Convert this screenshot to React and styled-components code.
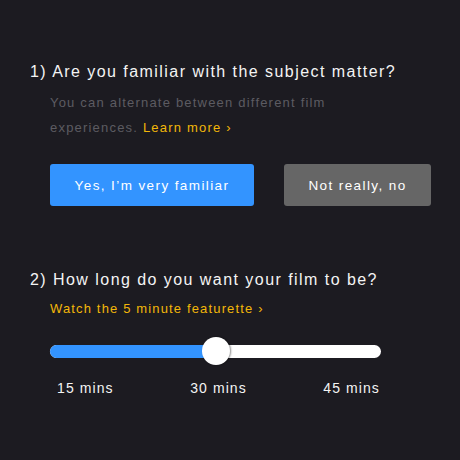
import React, {useState} from 'react'
import styled, {createGlobalStyle} from 'styled-components'

const GlobalStyle = createGlobalStyle`
    html, body {
        margin: 0;
        padding: 0;
        background-color: #1c1b21;
    }
    body {
        font-family: 'Liberation Sans', Arial, sans-serif;
        -webkit-font-smoothing: antialiased;
    }
`

const lengths = ['15 mins', '30 mins', '45 mins']

export default function App() {
    const [value] = useState(50)
    return(
        <>
            <GlobalStyle />
            <Page>
                <Question>1) Are you familiar with the subject matter?</Question>
                <Note>
                    You can alternate between different film experiences.{' '}
                    <Link href="#">Learn more ›</Link>
                </Note>
                <Choices>
                    <Choice $primary $width={204}>Yes, I’m very familiar</Choice>
                    <Choice $width={147}>Not really, no</Choice>
                </Choices>

                <Question $spaced>2) How long do you want your film to be?</Question>
                <Featurette href="#">Watch the 5 minute featurette ›</Featurette>
                <Slider>
                    <Track>
                        <Fill style={{width: `${value}%`}} />
                        <Thumb style={{left: `${value}%`}} />
                    </Track>
                </Slider>
                <Labels>
                    {lengths.map(l => <Label key={l}>{l}</Label>)}
                </Labels>
            </Page>
        </>
    )
}

const Page = styled.div`
    display: flex;
    flex-direction: column;
    width: 460px;
    height: 460px;
    box-sizing: border-box;
    padding: 60px 0 0 30px;
`
const Question = styled.h2`
    margin: ${p => p.$spaced ? '62px' : '0'} 0 0 0;
    font-size: 16px;
    font-weight: normal;
    line-height: 24px;
    letter-spacing: 1.45px;
    color: #f4f4f4;
`
const Note = styled.p`
    margin: 6px 0 0 20px;
    width: 292px;
    font-size: 13px;
    line-height: 25px;
    letter-spacing: 1.2px;
    color: #5c5b61;
`
const Link = styled.a`
    color: #f2b709;
    text-decoration: none;
`
const Choices = styled.div`
    display: flex;
    gap: 30px;
    margin: 24px 0 0 20px;
`
const Choice = styled.button`
    width: ${p => p.$width}px;
    height: 42px;
    padding: 0;
    border: none;
    border-radius: 3px;
    background-color: ${p => p.$primary ? '#3394ff' : '#666666'};
    color: #ffffff;
    font-family: 'Liberation Sans', Arial, sans-serif;
    font-size: 13.5px;
    letter-spacing: 1.4px;
    cursor: pointer;
`
const Featurette = styled.a`
    margin: 7px 0 0 20px;
    font-size: 13px;
    line-height: 20px;
    letter-spacing: 1.15px;
    color: #f2b709;
    text-decoration: none;
`
const Slider = styled.div`
    display: flex;
    align-items: center;
    width: 331px;
    height: 28px;
    margin: 18px 0 0 20px;
`
const Track = styled.div`
    position: relative;
    flex: 1;
    height: 13px;
    border-radius: 7px;
    background-color: #ffffff;
`
const Fill = styled.div`
    height: 100%;
    border-radius: 7px 0 0 7px;
    background-color: #3394ff;
`
const Thumb = styled.div`
    position: absolute;
    top: 50%;
    width: 28px;
    height: 28px;
    border-radius: 50%;
    background-color: #ffffff;
    box-shadow: 1px 0 2px rgba(0,0,0,.45);
    transform: translate(-50%, -50%);
`
const Labels = styled.div`
    display: flex;
    justify-content: space-between;
    width: 323px;
    margin: 13px 0 0 27px;
`
const Label = styled.span`
    font-size: 14px;
    line-height: 20px;
    letter-spacing: 1.1px;
    color: #f4f4f4;
`
